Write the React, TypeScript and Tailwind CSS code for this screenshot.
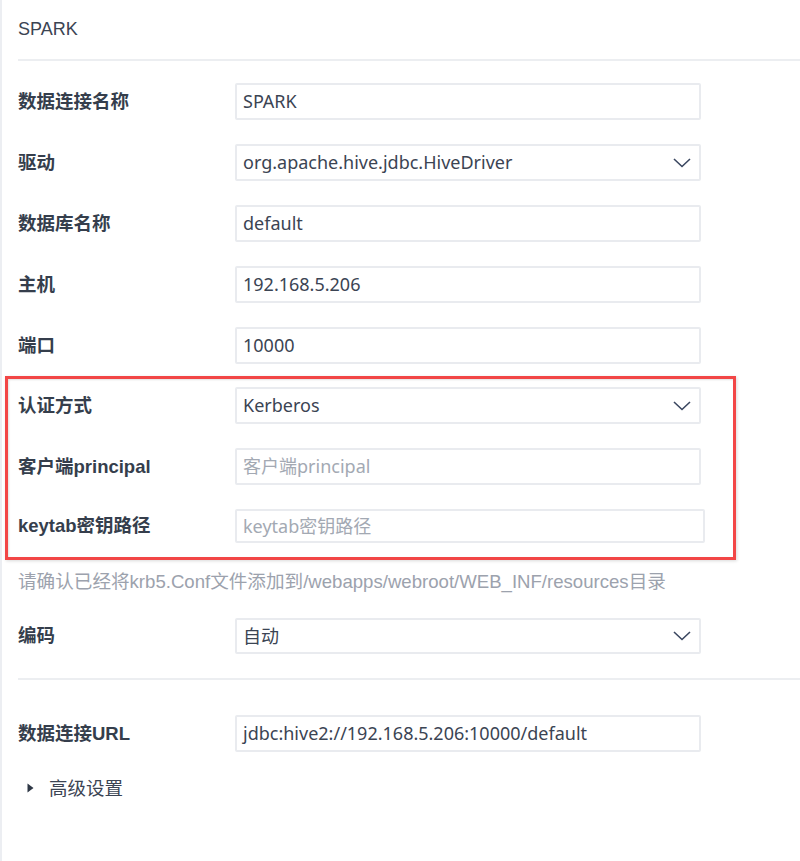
import React from "react";

const sans = "font-['Liberation_Sans','Noto_Sans_CJK_SC',sans-serif]";
const valueFont = "font-['Noto_Sans','Noto_Sans_CJK_SC',sans-serif]";

function Chevron() {
  return (
    <svg width="18" height="10" viewBox="0 0 18 10" className="shrink-0">
      <path d="M1 1 L9 8.5 L17 1" fill="none" stroke="#3a4760" strokeWidth="1.6" />
    </svg>
  );
}

interface FieldProps {
  label: string;
  value?: string;
  placeholder?: string;
  select?: boolean;
  wide?: boolean;
  h?: string;
}

function Field({ label, value, placeholder, select, wide, h = "h-[37px]" }: FieldProps) {
  return (
    <div className="flex items-center">
      <div className={`w-[217px] shrink-0 text-[18.5px] font-bold text-[#353e4c] ${sans}`}>{label}</div>
      <div
        className={`${wide ? "w-[470px]" : "w-[466px]"} ${h} flex items-center justify-between border-2 border-[#e9ebef] rounded-[2px] pl-[6px] pr-[8px] bg-white`}
      >
        {value ? (
          <span className={`text-[18px] text-[#3b4453] ${valueFont}`}>{value}</span>
        ) : (
          <span className={`text-[18px] text-[#a3a9b3] ${valueFont}`}>{placeholder}</span>
        )}
        {select && <Chevron />}
      </div>
    </div>
  );
}

export default function App() {
  return (
    <div className="w-[800px] min-h-[861px] bg-white border-l-2 border-[#eceef2] pl-[16px]">
      <div className={`h-[59px] flex items-center text-[18px] text-[#3b4453] ${sans}`}>SPARK</div>
      <div className="h-[2px] bg-[#eceef1]" />

      <div className="mt-[22px] flex flex-col gap-[24px]">
        <Field label="数据连接名称" value="SPARK" />
        <Field label="驱动" value="org.apache.hive.jdbc.HiveDriver" select />
        <Field label="数据库名称" value="default" />
        <Field label="主机" value="192.168.5.206" />
        <Field label="端口" value="10000" />
      </div>

      <div className="mt-[12px] -ml-[13px] w-[731px] border-[3px] border-[#f24646] pl-[10px] pt-[8px] pb-[14px] shadow-[inset_1px_1px_2px_rgba(0,0,0,0.12),1px_1px_3px_rgba(0,0,0,0.15)] flex flex-col gap-[24px]">
        <Field label="认证方式" value="Kerberos" select />
        <Field label="客户端principal" placeholder="客户端principal" />
        <Field label="keytab密钥路径" placeholder="keytab密钥路径" wide h="h-[34px]" />
      </div>

      <div className={`mt-[10px] leading-[24px] text-[18.6px] text-[#9ca2ad] ${sans}`}>
        请确认已经将krb5.Conf文件添加到/webapps/webroot/WEB_INF/resources目录
      </div>

      <div className="mt-[24px]">
        <Field label="编码" value="自动" select h="h-[36px]" />
      </div>

      <div className="mt-[24px] h-[2px] bg-[#eceef1]" />

      <div className="mt-[35px]">
        <Field label="数据连接URL" value="jdbc:hive2://192.168.5.206:10000/default" />
      </div>

      <div className="mt-[24px] flex items-center h-[24px]">
        <svg width="7" height="10" viewBox="0 0 7 10" className="ml-[9px] mr-[15px]">
          <path d="M0.5 0.5 L6.5 5 L0.5 9.5 Z" fill="#2f3846" />
        </svg>
        <span className={`text-[18.5px] text-[#3b4453] ${valueFont}`}>高级设置</span>
      </div>
    </div>
  );
}
